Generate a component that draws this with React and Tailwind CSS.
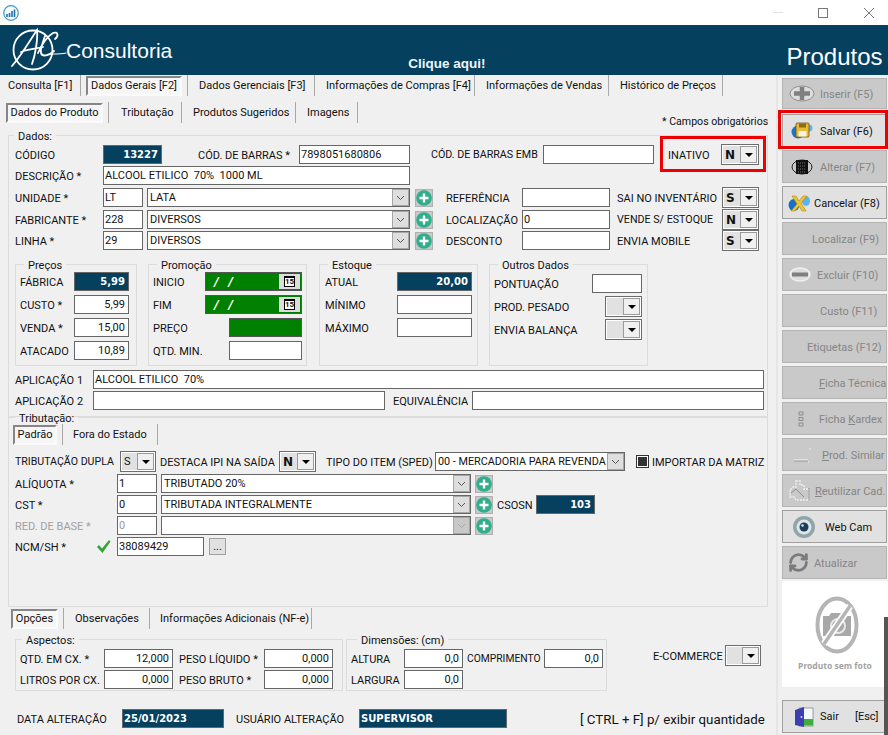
import React from 'react';
import { RefreshCw } from 'lucide-react';

const Input = ({ w, value, right, disabled, children }) => (
    <div className={`${w} h-[19px] shrink-0 flex items-center border border-[#666666] bg-white px-[1px] whitespace-pre leading-none ${right ? 'justify-end pr-[3px]' : ''} ${disabled ? 'text-[#9a9a9a]' : ''}`}>
        {value}{children}
    </div>
);

const Dark = ({ w, value, left }) => (
    <div className={`${w} h-[19px] shrink-0 flex items-center border border-[#666666] bg-[#06405f] text-white font-bold text-[10px] font-['DejaVu_Sans',sans-serif] ${left ? 'pl-[1px]' : 'justify-end pr-[3px]'}`}>
        {value}
    </div>
);

const Label = ({ w, children, cls = '' }) => (
    <span className={`${w} shrink-0 whitespace-pre leading-none pt-[2px] ${cls}`}>{children}</span>
);

const Chevron = ({ color = '#555555' }) => (
    <svg width="9" height="6" viewBox="0 0 9 6"><path d="M1 1l3.5 3.5L8 1" fill="none" stroke={color} strokeWidth="1" /></svg>
);

const Combo = ({ w, value, disabled, cls = '' }) => (
    <div className={`${w} h-[19px] shrink-0 flex items-center border border-[#666666] bg-white pl-[2px] whitespace-pre`}>
        <span className={`flex-1 leading-none ${cls}`}>{value}</span>
        <span className={`w-[17px] h-full flex items-center justify-center border border-[#a6a6a6] ${disabled ? 'bg-[#c8c8c8]' : 'bg-[#dedede]'}`}>
            <Chevron color={disabled ? '#a8a8a8' : '#555555'} />
        </span>
    </div>
);

const Select = ({ w, value, plain }) => (
    <div className={`${w} h-[21px] shrink-0 flex border border-[#6d6d6d] bg-white p-[1px]`}>
        <span className={`flex-1 flex items-center pl-[2px] bg-[#e1e1e1] leading-none ${plain ? 'text-[11px]' : 'font-bold text-[12px] font-[\'DejaVu_Sans\',sans-serif]'}`}>{value}</span>
        <span className="w-[17px] flex items-center justify-center border border-[#9a9a9a] bg-[#f0f0f0]">
            <span className="w-0 h-0 border-x-[4px] border-x-transparent border-t-[4px] border-t-black" />
        </span>
    </div>
);

const Plus = ({ cls = 'ml-[4px]' }) => (
    <span className={`${cls} w-[18px] h-[18px] shrink-0 flex items-center justify-center bg-[#c9c9c9] border border-[#b0b0b0]`}>
        <svg width="16" height="16" viewBox="0 0 16 16">
            <circle cx="8" cy="8" r="7.8" fill="#2fae8b" />
            <path d="M8 3.5v9M3.5 8h9" stroke="white" strokeWidth="2.4" />
        </svg>
    </span>
);

const DateField = () => (
    <div className="w-[97px] h-[19px] shrink-0 flex items-center border border-[#555555] bg-[#008000] p-[1px]">
        <span className="flex-1 pl-[7px] text-white font-bold italic text-[13px] whitespace-pre leading-none">/   /</span>
        <span className="w-[21px] h-full flex items-center justify-center bg-[#dcdcdc]">
            <span className="w-[11px] h-[11px] border border-black border-t-[2px] bg-white text-[8px] leading-[8px] text-center font-bold text-[#111111]">15</span>
        </span>
    </div>
);

const Tab = ({ w, pl, label, active, box }) => (
    <div className={`${w} ${pl} h-[21px] flex items-center border-r border-[#a8a8a8] leading-none`}>
        {active ? (
            <span className={`${box} h-[20px] flex items-center justify-center border-2 border-t-[#868686] border-l-[#868686] border-r-[#fbfbfb] border-b-[#fbfbfb] bg-[#f6f6f6]`}>{label}</span>
        ) : label}
    </div>
);

const Group = ({ w, h, legend, m, pl, cls = '', children }) => (
    <fieldset className={`${w} ${h} ${pl} ${cls} shrink-0 flex flex-col border border-[#dcdcdc]`}>
        <legend className={`${m} px-[4px] h-[12px] leading-[16px]`}>{legend}</legend>
        {children}
    </fieldset>
);

const Logo = () => (
    <svg width="62" height="50" viewBox="0 0 62 50" className="ml-[8px] shrink-0">
        <g fill="none" stroke="white" strokeLinecap="round">
            <circle cx="25" cy="25" r="19.5" strokeWidth="1.8" />
            <path d="M4 41C13 31 21 17 29 5c1 10-2 26-5 34M13 27c8-3 14-3 22-5" strokeWidth="1.8" />
            <path d="M30 28c4-9 10-17 15-20 5-2 6 3 2 6M37 11c-3 8-5 14-4 17 1 4 8 3 13-2" strokeWidth="1.8" />
            <path d="M44 29c5 0 10 0 14-1" strokeWidth="1.2" />
        </g>
    </svg>
);

const SaveIcon = () => (
    <svg width="22" height="18" viewBox="0 0 22 18">
        <circle cx="7" cy="10" r="6.5" fill="#1d74c9" />
        <circle cx="18" cy="6" r="3.5" fill="#5db4ee" />
        <rect x="5" y="1" width="13" height="14" rx="1" fill="#e9b93a" stroke="#6b5313" strokeWidth="0.8" />
        <rect x="8" y="1.5" width="7" height="4" fill="#8a6b16" />
        <rect x="7.5" y="9" width="8" height="5.5" fill="#f7f3df" />
    </svg>
);

const AlterIcon = () => (
    <svg width="22" height="18" viewBox="0 0 22 18">
        <ellipse cx="11" cy="9" rx="10" ry="7" fill="none" stroke="#222222" strokeWidth="1" />
        <rect x="5" y="2" width="12" height="14" fill="#111111" />
        <path d="M7 5h8M7 8h8M7 11h8M7 14h8" stroke="#777777" strokeDasharray="1 1" />
    </svg>
);

const CancelIcon = () => (
    <svg width="22" height="18" viewBox="0 0 22 18">
        <ellipse cx="6" cy="11" rx="5.5" ry="6" fill="#1571c8" />
        <ellipse cx="18" cy="7" rx="4" ry="5" fill="#5cb3ee" />
        <path d="M4 2h4l3 5 4-5h4l-6 7 5 8h-4l-3-5-4 5H3l6-7z" fill="#efc431" stroke="#a07d10" strokeWidth="0.5" />
    </svg>
);

const InsertIcon = () => (
    <svg width="26" height="17" viewBox="0 0 26 17">
        <ellipse cx="13" cy="8.5" rx="12" ry="7.5" fill="#dddddd" stroke="#8c8c8c" />
        <path d="M13 2v13M5 8.5h16" stroke="#808080" strokeWidth="4.5" />
    </svg>
);

const DeleteIcon = () => (
    <svg width="22" height="15" viewBox="0 0 22 15">
        <ellipse cx="11" cy="7.5" rx="10" ry="6.5" fill="#dddddd" stroke="#efefef" strokeWidth="1.4" />
        <rect x="3" y="5.5" width="16" height="4" fill="#808080" />
    </svg>
);

const KardexIcon = () => (
    <svg width="6" height="16" viewBox="0 0 6 16">
        <path d="M1 1h4v3H1zM1 6.5h4v3H1zM1 12h4v3H1z" fill="none" stroke="#8c8c8c" />
    </svg>
);

const SimilarIcon = () => (
    <svg width="18" height="16" viewBox="0 0 18 16">
        <path d="M0 13h14" stroke="#f2f2f2" strokeWidth="1.2" />
        <path d="M0 14h14" stroke="#8c8c8c" strokeWidth="0.8" />
        <path d="M16 1v2M14 15h1" stroke="#eeeeee" strokeWidth="1" />
    </svg>
);

const ReuseIcon = () => (
    <svg width="24" height="24" viewBox="0 0 24 24">
        <path d="M9 2h4v4h4v4h5v11H9l-2-3H3V11l3-3h3z" fill="none" stroke="#f0f0f0" strokeWidth="1.4" strokeDasharray="2 1" />
        <path d="M4 14l5-4 8 8M22 9v12" fill="none" stroke="#8f8f8f" strokeWidth="1" />
    </svg>
);

const WebcamIcon = () => (
    <svg width="22" height="22" viewBox="0 0 22 22">
        <circle cx="11" cy="11" r="11" fill="#8fa5a8" />
        <circle cx="11" cy="11" r="7.5" fill="#dde5e6" />
        <circle cx="11" cy="11" r="4.5" fill="#1d3c5c" />
        <circle cx="9.5" cy="9.5" r="1.3" fill="#cfe4f5" />
    </svg>
);

const DoorIcon = () => (
    <svg width="20" height="20" viewBox="0 0 20 20">
        <rect x="5" y="1" width="14" height="18" fill="#f4f8fb" stroke="#666666" strokeWidth="0.6" />
        <rect x="10" y="12" width="9" height="6.5" fill="#3fae3a" />
        <path d="M1 3l9-3v20l-9-2z" fill="#3b3fb0" />
        <circle cx="7.5" cy="10" r="1" fill="#cfd4ff" />
    </svg>
);

const BUTTONS = [
    { label: 'Inserir (F5)', slot: 'w-[37px]', h: 'h-[31px] mb-[2px]', icon: <InsertIcon /> },
    { label: 'Salvar (F6)', slot: 'w-[37px]', on: true, icon: <SaveIcon /> },
    { label: 'Alterar (F7)', slot: 'w-[37px]', icon: <AlterIcon /> },
    { label: 'Cancelar (F8)', slot: 'w-[31px]', on: true, icon: <CancelIcon /> },
    { label: 'Localizar (F9)', slot: 'w-[29px]' },
    { label: 'Excluir (F10)', slot: 'w-[34px]', icon: <DeleteIcon /> },
    { label: 'Custo (F11)', slot: 'w-[37px]' },
    { label: 'Etiquetas (F12)', slot: 'w-[24px]' },
    { label: <><u>F</u>icha Técnica</>, slot: 'w-[36px]' },
    { label: <>Ficha <u>K</u>ardex</>, slot: 'w-[36px]', icon: <KardexIcon /> },
    { label: <><u>P</u>rod. Similar</>, slot: 'w-[39px]', icon: <SimilarIcon /> },
    { label: <><u>R</u>eutilizar Cad.</>, slot: 'w-[32px]', icon: <ReuseIcon /> },
    { label: 'Web Cam', slot: 'w-[42px]', on: true, icon: <WebcamIcon /> },
    { label: 'Atualizar', slot: 'w-[31px]', icon: <RefreshCw size={21} strokeWidth={3.2} color="#7b7b7b" /> },
];

const SideButton = ({ label, slot, on, icon, h = 'h-[33px]' }) => (
    <div className={`${h} w-[105px] flex items-center border whitespace-pre ${on ? 'bg-[#e1e1e1] border-[#a0a0a0] text-[#111111]' : 'bg-[#c9c9c9] border-[#b4b4b4] text-[#858585]'}`}>
        <span className={`${slot} shrink-0 flex items-center justify-center`}>{icon}</span>
        <span className="leading-none pt-[2px]">{label}</span>
    </div>
);

const Sidebar = () => (
    <aside className="w-[112px] shrink-0 border-l-2 border-[#e6e6e6] pl-[4px] pt-[3px] flex flex-col">
        <div className="flex flex-col gap-[3px]">
            {BUTTONS.map((b, i) => <SideButton key={i} {...b} />)}
        </div>
        <div className="mt-[2px] w-[106px] h-[106px] bg-white flex flex-col items-center pt-[15px]">
            <svg width="44" height="58" viewBox="0 0 44 58" className="ml-[4px]">
                <ellipse cx="22" cy="29" rx="19.5" ry="26.5" fill="none" stroke="#b5b5b5" strokeWidth="4" />
                <path d="M8 20h6l2-3h12l2 3h6v20H8z" fill="#a8a8a8" />
                <circle cx="23" cy="30" r="7" fill="none" stroke="#e8e8e8" strokeWidth="2" />
                <path d="M9 48L35 10" stroke="white" strokeWidth="7" />
                <path d="M9 48L35 10" stroke="#b5b5b5" strokeWidth="3.5" />
            </svg>
            <span className="mt-[8px] text-[8.5px] leading-none font-bold text-[#a3a3a3] font-['Noto_Sans',sans-serif]">Produto sem foto</span>
        </div>
        <div className="mt-[13px] w-[105px] h-[33px] flex items-center border border-[#a0a0a0] bg-[#e1e1e1] text-[#111111] whitespace-pre">
            <span className="w-[37px] shrink-0 flex items-center justify-center pl-[4px]"><DoorIcon /></span>
            <span className="w-[35px] leading-none">Sair</span>
            <span className="leading-none">[Esc]</span>
        </div>
    </aside>
);

const DadosGroup = () => (
    <Group w="w-[760px]" h="h-[288px]" legend="Dados:" m="-ml-[1px]" pl="pl-[6px]" cls="ml-[8px] mt-[6px]">
        <div className="mt-[3px] h-[21px] flex items-center">
            <Label w="w-[88px]">CÓDIGO</Label>
            <Dark w="w-[59px]" value="13227" />
            <Label w="w-[101px]" cls="ml-[36px]">CÓD. DE BARRAS *</Label>
            <Input w="w-[111px]" value="7898051680806" />
            <Label w="w-[112px]" cls="ml-[21px] text-[10.7px]">CÓD. DE BARRAS EMB</Label>
            <Input w="w-[111px]" />
            <Label w="w-[53px]" cls="ml-[14px]">INATIVO</Label>
            <Select w="w-[38px]" value="N" />
        </div>
        <div className="mt-[1px] flex items-center">
            <Label w="w-[88px]" cls="pt-0">DESCRIÇÃO *</Label>
            <Input w="w-[307px]" value="ALCOOL ETILICO  70%  1000 ML" />
        </div>
        <div className="mt-[3px] h-[19px] flex items-center">
            <Label w="w-[88px]">UNIDADE *</Label>
            <Input w="w-[40px]" value="LT" />
            <span className="w-[4px]" />
            <Combo w="w-[263px]" value="LATA" />
            <Plus cls="ml-[5px]" />
            <Label w="w-[76px]" cls="ml-[13px]">REFERÊNCIA</Label>
            <Input w="w-[88px]" />
            <Label w="w-[105px]" cls="ml-[7px]">SAI NO INVENTÁRIO</Label>
            <Select w="w-[37px]" value="S" />
        </div>
        <div className="mt-[3px] h-[19px] flex items-center">
            <Label w="w-[88px]" cls="pt-0 pb-[1px]">FABRICANTE *</Label>
            <Input w="w-[40px]" value="228" />
            <span className="w-[4px]" />
            <Combo w="w-[263px]" value="DIVERSOS" />
            <Plus cls="ml-[5px]" />
            <Label w="w-[76px]" cls="ml-[13px] pt-0">LOCALIZAÇÃO</Label>
            <Input w="w-[88px]" value="0" />
            <Label w="w-[105px]" cls="ml-[7px] text-[10.7px]">VENDE S/ ESTOQUE</Label>
            <Select w="w-[37px]" value="N" />
        </div>
        <div className="mt-[2px] h-[19px] flex items-center">
            <Label w="w-[88px]" cls="pt-0">LINHA *</Label>
            <Input w="w-[40px]" value="29" />
            <span className="w-[4px]" />
            <Combo w="w-[263px]" value="DIVERSOS" />
            <Plus cls="ml-[5px]" />
            <Label w="w-[76px]" cls="ml-[13px] pt-0">DESCONTO</Label>
            <Input w="w-[88px]" />
            <Label w="w-[105px]" cls="ml-[7px] pt-0">ENVIA MOBILE</Label>
            <Select w="w-[37px]" value="S" />
        </div>

        <div className="mt-[8px] flex">
            <Group w="w-[122px]" h="h-[108px]" legend="Preços" m="ml-[4px]" pl="pl-[4px]">
                <div className="mt-[2px] flex flex-col gap-[4px]">
                    <div className="flex items-center"><Label w="w-[54px]">FÁBRICA</Label><Dark w="w-[55px]" value="5,99" /></div>
                    <div className="flex items-center"><Label w="w-[54px]">CUSTO *</Label><Input w="w-[55px]" value="5,99" right /></div>
                    <div className="flex items-center"><Label w="w-[54px]">VENDA *</Label><Input w="w-[55px]" value="15,00" right /></div>
                    <div className="flex items-center"><Label w="w-[54px]">ATACADO</Label><Input w="w-[55px]" value="10,89" right /></div>
                </div>
            </Group>
            <Group w="w-[159px]" h="h-[108px]" legend="Promoção" m="ml-[4px]" pl="pl-[4px]" cls="ml-[11px]">
                <div className="mt-[2px] flex flex-col gap-[4px]">
                    <div className="flex items-center"><Label w="w-[52px]">INICIO</Label><DateField /></div>
                    <div className="flex items-center"><Label w="w-[52px]">FIM</Label><DateField /></div>
                    <div className="flex items-center">
                        <Label w="w-[76px]">PREÇO</Label>
                        <div className="w-[73px] h-[19px] border border-[#555555] bg-[#008000]" />
                    </div>
                    <div className="flex items-center"><Label w="w-[76px]">QTD. MIN.</Label><Input w="w-[73px]" /></div>
                </div>
            </Group>
            <Group w="w-[159px]" h="h-[108px]" legend="Estoque" m="ml-[3px]" pl="pl-[5px]" cls="ml-[12px]">
                <div className="mt-[2px] flex flex-col gap-[4px]">
                    <div className="flex items-center"><Label w="w-[72px]">ATUAL</Label><Dark w="w-[75px]" value="20,00" /></div>
                    <div className="flex items-center"><Label w="w-[72px]">MÍNIMO</Label><Input w="w-[75px]" /></div>
                    <div className="flex items-center"><Label w="w-[72px]">MÁXIMO</Label><Input w="w-[75px]" /></div>
                </div>
            </Group>
            <Group w="w-[159px]" h="h-[108px]" legend="Outros Dados" m="ml-[4px]" pl="pl-[4px]" cls="ml-[11px]">
                <div className="mt-[4px] flex items-center"><Label w="w-[98px]" cls="pt-0">PONTUAÇÃO</Label><Input w="w-[50px]" /></div>
                <div className="mt-[3px] flex items-center"><Label w="w-[111px]">PROD. PESADO</Label><Select w="w-[37px]" /></div>
                <div className="mt-[2px] flex items-center"><Label w="w-[111px]">ENVIA BALANÇA</Label><Select w="w-[37px]" /></div>
            </Group>
        </div>

        <div className="mt-[4px] flex items-center">
            <Label w="w-[78px]" cls="pt-0">APLICAÇÃO 1</Label>
            <Input w="w-[671px]" value="ALCOOL ETILICO  70%" />
        </div>
        <div className="mt-[2px] flex items-center">
            <Label w="w-[78px]" cls="pt-0">APLICAÇÃO 2</Label>
            <Input w="w-[292px]" />
            <Label w="w-[79px]" cls="ml-[8px] pt-0">EQUIVALÊNCIA</Label>
            <Input w="w-[292px]" />
        </div>
    </Group>
);

const TributacaoGroup = () => (
    <Group w="w-[760px]" h="h-[196px]" legend="Tributação:" m="ml-[2px]" pl="pl-[4px]" cls="ml-[8px] -mt-[6px]">
        <div className="mt-[1px] flex">
            <Tab w="w-[50px]" active box="w-[44px]" label="Padrão" />
            <Tab w="w-[95px]" pl="pl-[10px]" label="Fora do Estado" />
        </div>
        <div className="mt-[6px] pl-[2px] h-[21px] flex items-center">
            <Label w="w-[105px]" cls="text-[10.6px]">TRIBUTAÇÃO DUPLA</Label>
            <Select w="w-[36px]" value="S" plain />
            <Label w="w-[119px]" cls="ml-[4px]">DESTACA IPI NA SAÍDA</Label>
            <Select w="w-[37px]" value="N" />
            <Label w="w-[109px]" cls="ml-[10px]">TIPO DO ITEM (SPED)</Label>
            <Combo w="w-[190px]" value="00 - MERCADORIA PARA REVENDA" cls="text-[10.8px] pt-[2px]" />
            <span className="ml-[11px] w-[13px] h-[13px] shrink-0 flex items-center justify-center border border-[#333333] bg-white">
                <span className="w-[9px] h-[9px] bg-[#333333]" />
            </span>
            <Label w="w-[112px]" cls="ml-[3px] pt-0">IMPORTAR DA MATRIZ</Label>
        </div>
        <div className="mt-[2px] pl-[2px] flex items-center">
            <Label w="w-[102px]">ALÍQUOTA *</Label>
            <Input w="w-[40px]" value="1" />
            <span className="w-[4px]" />
            <Combo w="w-[310px]" value="TRIBUTADO 20%" />
            <Plus />
        </div>
        <div className="mt-[2px] pl-[2px] flex items-center">
            <Label w="w-[102px]">CST *</Label>
            <Input w="w-[40px]" value="0" />
            <span className="w-[4px]" />
            <Combo w="w-[310px]" value="TRIBUTADA INTEGRALMENTE" />
            <Plus />
            <Label w="w-[39px]" cls="ml-[4px]">CSOSN</Label>
            <Dark w="w-[59px]" value="103" />
        </div>
        <div className="mt-[2px] pl-[2px] flex items-center">
            <Label w="w-[102px]" cls="text-[#a0a0a0]">RED. DE BASE *</Label>
            <Input w="w-[40px]" value="0" disabled />
            <span className="w-[4px]" />
            <Combo w="w-[310px]" disabled />
            <Plus />
        </div>
        <div className="mt-[2px] pl-[2px] flex items-center">
            <Label w="w-[81px]" cls="pt-0">NCM/SH *</Label>
            <svg width="15" height="15" viewBox="0 0 15 15" className="shrink-0">
                <path d="M1 8l2-2 3 3.5L13 1l1.5 1.5L6.5 14z" fill="#35a535" />
            </svg>
            <span className="w-[6px]" />
            <Input w="w-[87px]" value="38089429" />
            <span className="ml-[5px] w-[17px] h-[17px] flex items-center justify-center bg-[#e1e1e1] border border-[#a0a0a0] leading-none">...</span>
        </div>
    </Group>
);

const OptionsArea = () => (
    <>
        <div className="mt-[1px] flex">
            <Tab w="w-[64px]" pl="pl-[11px]" active box="w-[47px]" label="Opções" />
            <Tab w="w-[86px]" pl="pl-[11px]" label="Observações" />
            <Tab w="w-[162px]" pl="pl-[10px]" label="Informações Adicionais (NF-e)" />
        </div>
        <div className="mt-[4px] ml-[15px] flex items-start">
            <Group w="w-[328px]" h="h-[58px]" legend="Aspectos:" m="ml-[2px]" pl="pl-[4px]">
                <div className="mt-[4px] flex flex-col gap-[2px]">
                    <div className="flex items-center">
                        <Label w="w-[84px]" cls="pt-0">QTD. EM CX. *</Label>
                        <Input w="w-[69px]" value="12,000" right />
                        <Label w="w-[85px]" cls="ml-[6px]">PESO LÍQUIDO *</Label>
                        <Input w="w-[69px]" value="0,000" right />
                    </div>
                    <div className="flex items-center">
                        <Label w="w-[84px]" cls="pt-0">LITROS POR CX.</Label>
                        <Input w="w-[69px]" value="0,000" right />
                        <Label w="w-[85px]" cls="ml-[6px]">PESO BRUTO *</Label>
                        <Input w="w-[69px]" value="0,000" right />
                    </div>
                </div>
            </Group>
            <Group w="w-[261px]" h="h-[58px]" legend="Dimensões: (cm)" m="ml-[6px]" pl="pl-[4px]" cls="ml-[3px]">
                <div className="mt-[4px] flex flex-col gap-[2px]">
                    <div className="flex items-center">
                        <Label w="w-[53px]" cls="pt-0">ALTURA</Label>
                        <Input w="w-[59px]" value="0,0" right />
                        <Label w="w-[77px]" cls="ml-[4px] text-[10.3px]">COMPRIMENTO</Label>
                        <Input w="w-[59px]" value="0,0" right />
                    </div>
                    <div className="flex items-center">
                        <Label w="w-[53px]" cls="pt-0">LARGURA</Label>
                        <Input w="w-[59px]" value="0,0" right />
                    </div>
                </div>
            </Group>
            <div className="ml-[46px] mt-[12px] flex items-center">
                <Label w="w-[72px]" cls="pt-0">E-COMMERCE</Label>
                <Select w="w-[36px]" />
            </div>
        </div>
        <div className="mt-[18px] ml-[17px] flex items-center">
            <Label w="w-[105px]" cls="pt-0">DATA ALTERAÇÃO</Label>
            <Dark w="w-[102px]" value="25/01/2023" left />
            <Label w="w-[123px]" cls="ml-[12px] pt-0">USUÁRIO ALTERAÇÃO</Label>
            <Dark w="w-[148px]" value="SUPERVISOR" left />
            <Label w="w-[186px]" cls="ml-[73px] pt-0 text-[13.3px]">[ CTRL + F] p/ exibir quantidade</Label>
        </div>
    </>
);

const App = () => (
    <div className="relative w-[888px] h-[735px] overflow-hidden bg-[#f0f0f0] text-[#111111] text-[11px] font-['Roboto',sans-serif]">
        <div className="h-[25px] bg-white flex items-center pl-[3px]">
            <svg width="16" height="16" viewBox="0 0 16 16">
                <circle cx="8" cy="8" r="7.3" fill="#f4fbff" stroke="#3d9ac9" strokeWidth="1.2" />
                <path d="M4 9v3M6.5 8v4M9 6v6M11.5 4.5V12" stroke="#1f6fb0" strokeWidth="1.6" />
            </svg>
            <div className="ml-auto flex items-center">
                <span className="w-[10px] h-[1px] bg-[#e2e2e2]" />
                <span className="ml-[35px] w-[10px] h-[10px] border border-[#777777]" />
                <svg width="10" height="10" viewBox="0 0 10 10" className="ml-[36px] mr-[14px]">
                    <path d="M0 0l10 10M10 0L0 10" stroke="#777777" strokeWidth="1" />
                </svg>
            </div>
        </div>
        <header className="h-[50px] bg-[#06405f] text-white flex font-['Liberation_Sans',sans-serif]">
            <Logo />
            <span className="-ml-[4px] mt-[14px] text-[21px] leading-[24px]">Consultoria</span>
            <span className="ml-[236px] mt-[31px] text-[13.5px] leading-[16px] font-bold text-[#eef6fb]">Clique aqui!</span>
            <span className="ml-[301px] mt-[18px] text-[24px] leading-[28px]">Produtos</span>
        </header>
        <div className="flex h-[660px]">
            <main className="w-[776px] shrink-0 flex flex-col">
                <div className="flex h-[21px]">
                    <Tab w="w-[81px]" pl="pl-[8px]" label="Consulta [F1]" />
                    <Tab w="w-[107px]" pl="pl-[5px]" active box="w-[96px]" label="Dados Gerais [F2]" />
                    <Tab w="w-[127px]" pl="pl-[11px]" label="Dados Gerenciais [F3]" />
                    <Tab w="w-[160px]" pl="pl-[11px]" label="Informações de Compras [F4]" />
                    <Tab w="w-[134px]" pl="pl-[11px]" label="Informações de Vendas" />
                    <Tab w="w-[114px]" pl="pl-[11px]" label="Histórico de Preços" />
                </div>
                <div className="mt-[6px] flex items-end">
                    <Tab w="w-[109px]" pl="pl-[6px]" active box="w-[97px]" label="Dados do Produto" />
                    <Tab w="w-[73px]" pl="pl-[12px]" label="Tributação" />
                    <Tab w="w-[114px]" pl="pl-[11px]" label="Produtos Sugeridos" />
                    <Tab w="w-[62px]" pl="pl-[11px]" label="Imagens" />
                    <span className="ml-[304px] text-[10.6px] leading-none mb-[-5px]">* Campos obrigatórios</span>
                </div>
                <DadosGroup />
                <TributacaoGroup />
                <OptionsArea />
            </main>
            <Sidebar />
        </div>

        <div className="absolute left-[660px] top-[136px] w-[106px] h-[36px] border-[3px] border-[#ee0000]" />
        <div className="absolute left-[778px] top-[110px] w-[110px] h-[39px] border-[3px] border-[#ee0000]" />
        <div className="absolute left-[884px] top-[617px] w-[4px] h-[118px] bg-[#555555]" />
    </div>
);

export default App;
